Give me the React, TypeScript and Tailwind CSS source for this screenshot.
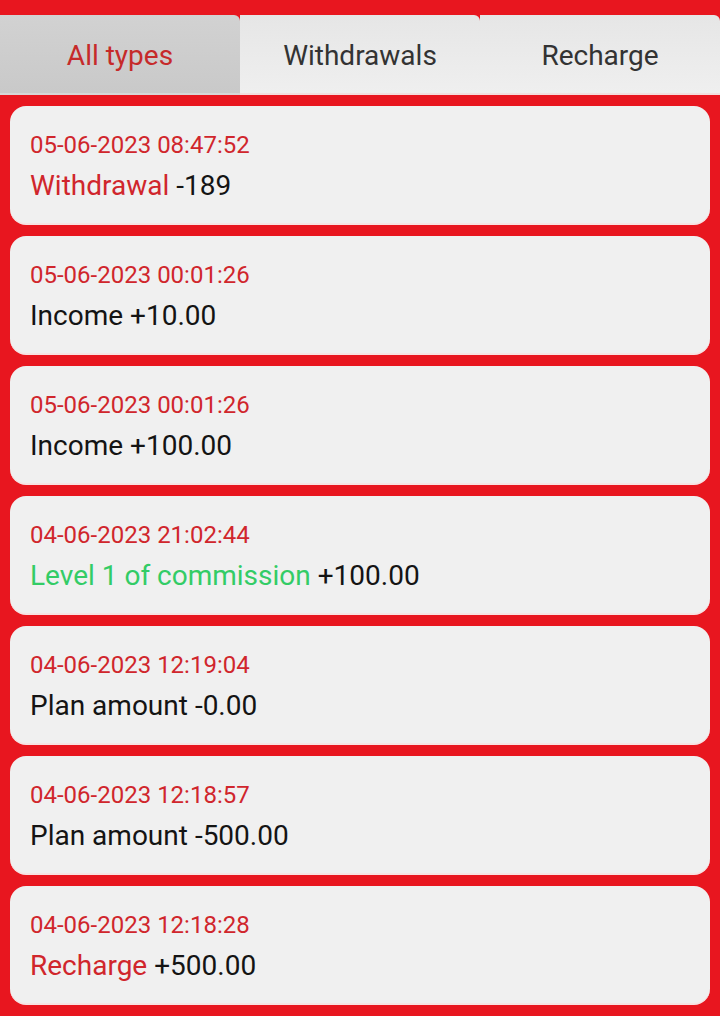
import React, { useState } from "react";

interface Record {
  time: string;
  label: string;
  amount: string;
  tone: "red" | "green" | "plain";
}

const records: Record[] = [
  { time: "05-06-2023 08:47:52", label: "Withdrawal", amount: "-189", tone: "red" },
  { time: "05-06-2023 00:01:26", label: "Income", amount: "+10.00", tone: "plain" },
  { time: "05-06-2023 00:01:26", label: "Income", amount: "+100.00", tone: "plain" },
  { time: "04-06-2023 21:02:44", label: "Level 1 of commission", amount: "+100.00", tone: "green" },
  { time: "04-06-2023 12:19:04", label: "Plan amount", amount: "-0.00", tone: "plain" },
  { time: "04-06-2023 12:18:57", label: "Plan amount", amount: "-500.00", tone: "plain" },
  { time: "04-06-2023 12:18:28", label: "Recharge", amount: "+500.00", tone: "red" },
];

const tabs = ["All types", "Withdrawals", "Recharge"];

export default function App() {
  const [active, setActive] = useState(0);

  return (
    <div
      className="w-[720px] bg-white"
      style={{ fontFamily: "Roboto, 'Noto Sans', sans-serif" }}
    >
      <div className="bg-[#e8161f] pt-[15px] pb-[11px]">
        {/* Tabs */}
        <div className="grid grid-cols-3 h-[80px]">
          {tabs.map((t, i) => (
            <button
              key={t}
              onClick={() => setActive(i)}
              className={
                i === active
                  ? "flex items-center justify-center pt-[4px] rounded-tr-[6px] bg-gradient-to-b from-[#d2d2d2] to-[#c9c9c9] text-[28px] text-[#c62a2a] border-b-2 border-[#d7d7d7]"
                  : "flex items-center justify-center pt-[4px] rounded-tr-[6px] bg-gradient-to-b from-[#e6e6e6] to-[#efefef] text-[28px] text-[#333333] border-b-2 border-[#f2dede]"
              }
            >
              {t}
            </button>
          ))}
        </div>

        {/* Records */}
        <div className="flex flex-col gap-[11px] px-[10px] pt-[11px]">
          {records.map((r, i) => (
            <div
              key={i}
              className="h-[119px] rounded-[16px] bg-[#f0f0f0] pl-[20px] pt-[25px] border-b-2 border-[#f7e3e3]"
            >
              <div className="text-[24px] leading-[28px] text-[#d0262c]">
                {r.time}
              </div>
              <div className="mt-[7px] text-[28px] leading-[40px] text-[#141414]">
                <span
                  className={
                    r.tone === "red"
                      ? "text-[#d0262c]"
                      : r.tone === "green"
                      ? "text-[#33cc66]"
                      : ""
                  }
                >
                  {r.label}
                </span>{" "}
                {r.amount}
              </div>
            </div>
          ))}
        </div>
      </div>
      <div className="h-[7px] bg-white" />
    </div>
  );
}
